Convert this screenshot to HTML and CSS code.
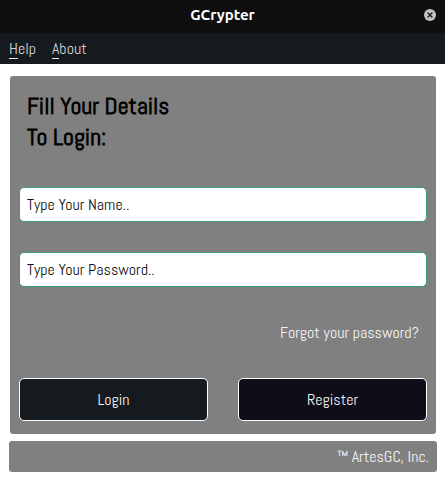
FILE: index.html
```html
<!DOCTYPE html>
<html lang="en">
<head>
<meta charset="utf-8">
<title>GCrypter</title>
<link rel="stylesheet" href="styles.css">
</head>
<body>
<header class="titlebar">
  <h1 class="title">GCrypter</h1>
  <button class="close" type="button" aria-label="Close">
    <svg viewBox="0 0 12 12" width="12" height="12" aria-hidden="true">
      <circle cx="6" cy="6" r="6" fill="#c4c4c4"/>
      <path d="M3.6 3.6l4.8 4.8M8.4 3.6l-4.8 4.8" stroke="#222" stroke-width="1.4"/>
    </svg>
  </button>
</header>
<nav class="menubar">
  <a class="menu" href="#help"><span class="key">H</span>elp</a>
  <a class="menu" href="#about"><span class="key">A</span>bout</a>
</nav>
<main class="content">
  <form class="card">
    <h2 class="heading">Fill Your Details<br>To Login:</h2>
    <input class="field" type="text" aria-label="Name" placeholder="Type Your Name..">
    <input class="field" type="password" aria-label="Password" placeholder="Type Your Password..">
    <a class="forgot" href="#forgot">Forgot your password?</a>
    <div class="actions">
      <button class="action login" type="submit">Login</button>
      <button class="action register" type="button">Register</button>
    </div>
  </form>
</main>
<footer class="footer">™ ArtesGC, Inc.</footer>
</body>
</html>
```
FILE: styles.css
```css
* {
  box-sizing: border-box;
}

body {
  margin: 0;
  background: #fff;
  font: 16px/20px Abel, "Roboto Condensed", "Liberation Sans Narrow", "Liberation Sans", sans-serif;
  color: #f4f4f4;
}

a {
  color: inherit;
  text-decoration: none;
}

.titlebar {
  display: grid;
  grid-template-columns: 1fr auto 1fr;
  align-items: center;
  height: 33px;
  padding: 0 9px;
  background: #0f0f0f;
}

.title {
  grid-column: 2;
  margin: 0;
  padding-bottom: 3px;
  font: bold 15px/20px Ubuntu, "Noto Sans", sans-serif;
  color: #fff;
}

.close {
  justify-self: end;
  display: flex;
  margin: 0 0 3px;
  padding: 0;
  border: 0;
  background: none;
}

.menubar {
  display: flex;
  gap: 16px;
  height: 31px;
  padding: 6px 9px;
  background: #151a1e;
  color: #d6d6d6;
}

.key {
  display: inline-block;
  height: 20px;
  border-bottom: 1px solid #e8e8e8;
}

.content {
  padding: 12px 9px 7px 10px;
}

.card {
  display: flex;
  flex-direction: column;
  padding: 14px 9px 13px;
  border-radius: 3px;
  background: gray;
}

.heading {
  margin: 0 8px 35px;
  font-size: 24px;
  line-height: 31px;
  font-weight: bold;
  color: #000;
}

.field {
  width: 100%;
  height: 35px;
  margin-bottom: 30px;
  padding: 0 7px;
  border: 1px solid #3a9c7c;
  border-radius: 5px;
  background: #fff;
  font: inherit;
  color: #111;
}

.field::placeholder {
  color: #111;
  opacity: 1;
}

.forgot {
  align-self: flex-end;
  margin: 6px 8px 35px;
}

.actions {
  display: grid;
  grid-template-columns: 1fr 1fr;
  gap: 30px;
}

.action {
  height: 43px;
  padding: 0;
  border: 1px solid #fff;
  border-radius: 5px;
  font: inherit;
  color: #f4f4f4;
}

.login {
  background: #151a1e;
}

.register {
  background: #0f0d17;
}

.footer {
  margin: 0 8px 9px 9px;
  padding: 6px 8px 5px;
  border-radius: 3px;
  background: gray;
  text-align: right;
}
```
